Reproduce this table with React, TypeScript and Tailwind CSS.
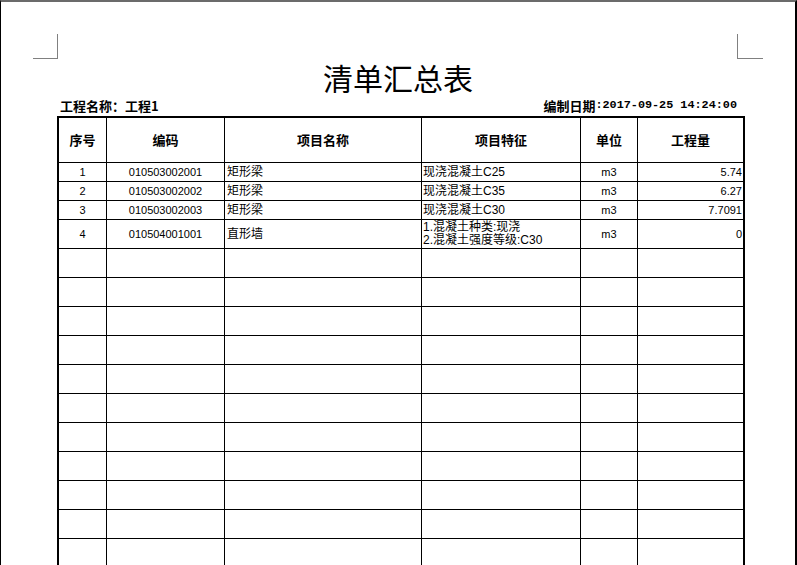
const items = [
  { no: '1', code: '010503002001', name: '矩形梁', feature: ['现浇混凝土C25'], unit: 'm3', qty: '5.74' },
  { no: '2', code: '010503002002', name: '矩形梁', feature: ['现浇混凝土C35'], unit: 'm3', qty: '6.27' },
  { no: '3', code: '010503002003', name: '矩形梁', feature: ['现浇混凝土C30'], unit: 'm3', qty: '7.7091' },
  {
    no: '4',
    code: '010504001001',
    name: '直形墙',
    feature: ['1.混凝土种类:现浇', '2.混凝土强度等级:C30'],
    unit: 'm3',
    qty: '0',
  },
];

const headers = ['序号', '编码', '项目名称', '项目特征', '单位', '工程量'];

const grid = 'grid grid-cols-[48px_118px_197px_159px_57px_105px] border-b border-black';
const cell = 'flex items-center border-r border-black overflow-hidden';

function CornerMark({ side }: { side: 'left' | 'right' }) {
  return side === 'left' ? (
    <div className="w-[25px] h-[25px] border-r border-b border-[#808080]" />
  ) : (
    <div className="w-[26px] h-[25px] border-l border-b border-[#808080]" />
  );
}

export default function App() {
  return (
    <div className="w-[797px] h-[565px] overflow-hidden bg-white border-t-2 border-t-[#6b6b6b] border-l border-l-black border-r-2 border-r-black text-black [font-family:'Liberation_Sans','Noto_Sans_CJK_SC',sans-serif]">
      {/* print margin marks */}
      <div className="flex justify-between mt-[32px] pl-[32px] pr-[32px]">
        <CornerMark side="left" />
        <CornerMark side="right" />
      </div>

      <h1 className="mt-[3px] h-[30px] text-center text-[30px] leading-[30px] [font-family:'Noto_Sans_CJK_SC',serif]">
        清单汇总表
      </h1>

      <div className="ml-[56px] w-[688px]">
        <div className="mt-[7px] h-[13px] flex justify-between items-center pl-[3px] pr-[8px] font-bold text-[13px] leading-[13px]">
          <span className="[font-family:'Noto_Sans_CJK_SC',sans-serif]">工程名称：工程1</span>
          <span className="flex items-center">
            <span className="[font-family:'Noto_Sans_CJK_SC',sans-serif]">编制日期</span>
            <span className="text-[11.8px] [font-family:'Liberation_Mono',monospace]">:2017-09-25 14:24:00</span>
          </span>
        </div>

        <div className="mt-[4px] border-t-2 border-x-2 border-black">
          <div className={`${grid} h-[45px]`}>
            {headers.map((h, i) => (
              <div
                key={h}
                className={`${cell} justify-center font-bold text-[13px] [font-family:'Noto_Sans_CJK_SC',sans-serif] ${i === 5 ? 'border-r-0' : ''}`}
              >
                {h}
              </div>
            ))}
          </div>

          {items.map((r) => (
            <div key={r.no} className={`${grid} ${r.feature.length > 1 ? 'h-[29px]' : 'h-[19px]'} text-[12px]`}>
              <div className={`${cell} justify-center text-[11px]`}>{r.no}</div>
              <div className={`${cell} justify-center text-[11px]`}>{r.code}</div>
              <div className={`${cell} pl-[2px]`}>{r.name}</div>
              <div className={`${cell} pl-[1px]`}>
                <div className="flex flex-col leading-[13px]">
                  {r.feature.map((f) => (
                    <span key={f} className="whitespace-nowrap">{f}</span>
                  ))}
                </div>
              </div>
              <div className={`${cell} justify-center text-[11px]`}>{r.unit}</div>
              <div className={`${cell} justify-end pr-[1px] border-r-0 text-[11px]`}>{r.qty}</div>
            </div>
          ))}

          {Array.from({ length: 12 }).map((_, i) => (
            <div key={i} className={`${grid} h-[29px]`}>
              <div className={cell} />
              <div className={cell} />
              <div className={cell} />
              <div className={cell} />
              <div className={cell} />
              <div className={`${cell} border-r-0`} />
            </div>
          ))}
        </div>
      </div>
    </div>
  );
}
